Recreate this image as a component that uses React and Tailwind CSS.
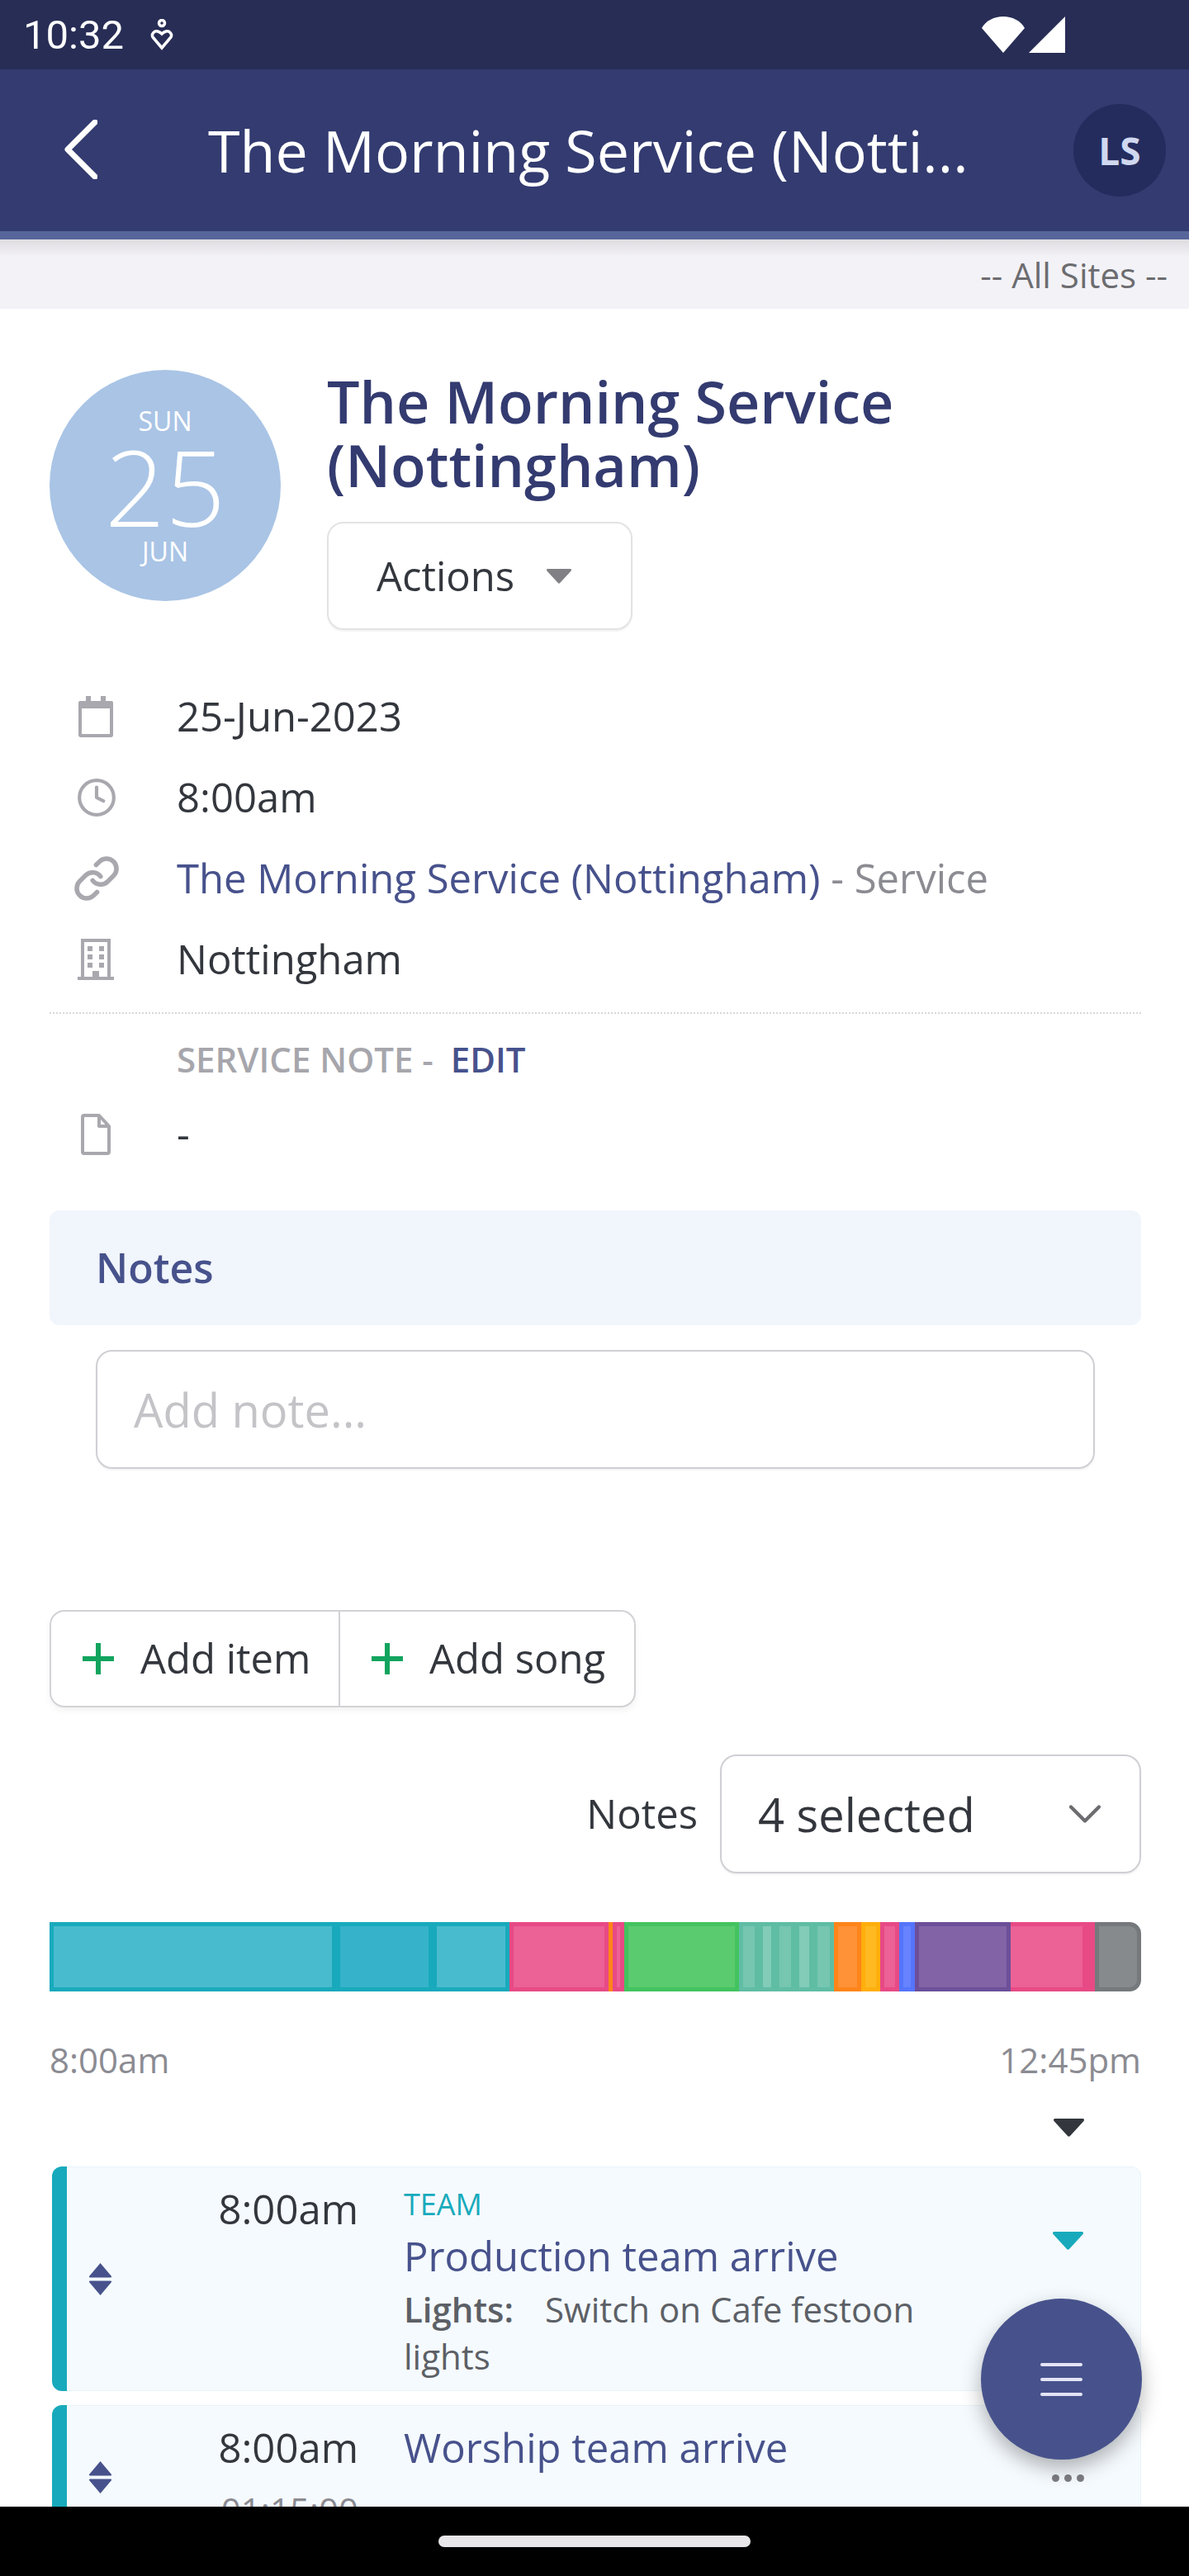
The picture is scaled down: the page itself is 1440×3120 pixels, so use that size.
import React from "react";
import { ChevronDown, Clock, Link } from "lucide-react";

// timeline blocks, x positions read off the reference
const SEGMENTS = [
  { w: 347, cls: "border-[#18aabc] bg-[#49bbce]" },
  { w: 117, cls: "border-[#18aabc] bg-[#36b3ca]" },
  { w: 93, cls: "border-[#18aabc] bg-[#49bbce]" },
  { w: 120, cls: "border-[#e74a85] bg-[#ec6196]" },
  { w: 5, cls: "border-x-0 border-[#ff8419] bg-[#ff8419]" },
  { w: 14, cls: "border-[#e74a85] bg-[#ec6196]" },
  { w: 139, cls: "border-[#43c35f] bg-[#5bcb6f]" },
  { w: 24, cls: "border-[#5fbda4] bg-[#76c6b0]" },
  { w: 20, cls: "border-[#5fbda4] bg-[#82ccb8]" },
  { w: 24, cls: "border-[#5fbda4] bg-[#76c6b0]" },
  { w: 22, cls: "border-[#5fbda4] bg-[#82ccb8]" },
  { w: 25, cls: "border-[#5fbda4] bg-[#76c6b0]" },
  { w: 33, cls: "border-[#ff8419] bg-[#ff9137]" },
  { w: 23, cls: "border-[#ffae0c] bg-[#ffba22]" },
  { w: 23, cls: "border-[#e74a85] bg-[#ec6196]" },
  { w: 19, cls: "border-[#5574fb] bg-[#6783ff]" },
  { w: 116, cls: "border-[#6c4f99] bg-[#8263a6]" },
  { w: 102, cls: "border-l-0 border-r-[15px] border-[#e74a85] bg-[#ec6196]" },
  { w: 56, cls: "border-[#75797c] bg-[#868a8c] rounded-r-[14px]" },
];

const Triangle = ({ className }) => (
  <svg viewBox="0 0 37 22" className={className} fill="currentColor">
    <path d="M2 0h33c2 0 2.500 1.500 1.500 3L20 21c-.8 1-2.200 1-3 0L.5 3C-.5 1.500 0 0 2 0z" />
  </svg>
);

const SortIcon = () => (
  <svg viewBox="0 0 27 39" className="w-[27px] h-[39px] text-[#47528c]" fill="currentColor">
    <path d="M13.500 0 27 16c.3.800 0 1.500-1 1.500H1c-1 0-1.300-.7-1-1.500z" />
    <path d="M13.500 39 27 23c.3-.8 0-1.500-1-1.500H1c-1 0-1.300.7-1 1.500z" />
  </svg>
);

const PlusIcon = () => (
  <svg viewBox="0 0 38 38" className="w-[38px] h-[38px] text-[#12a45e] mr-[32px]" fill="currentColor">
    <path d="M16 0h6v16h16v6H22v16h-6V22H0v-6h16z" />
  </svg>
);

const CalendarIcon = () => (
  <svg viewBox="0 0 44 50" className="w-[44px] h-[50px] ml-[2px]" fill="none">
    <path d="M3 6h38a2 2 0 0 1 2 2v39a3 3 0 0 1-3 3H4a3 3 0 0 1-3-3V8a2 2 0 0 1 2-2z" fill="#a8a8ae" />
    <rect x="5" y="15" width="34" height="31" fill="#fff" />
    <rect x="10" y="0" width="6" height="8" fill="#a8a8ae" />
    <rect x="28" y="0" width="6" height="8" fill="#a8a8ae" />
  </svg>
);

const BuildingIcon = () => (
  <svg viewBox="0 0 44 50" className="w-[44px] h-[50px] ml-[2px]" fill="#a8a8ae">
    <path d="M4 0h36v46h5v4H-1v-4h5zm4 4v42h10v-7h8v7h10V4z" />
    <rect x="12" y="9" width="6" height="6" />
    <rect x="26" y="9" width="6" height="6" />
    <rect x="12" y="19" width="6" height="6" />
    <rect x="26" y="19" width="6" height="6" />
    <rect x="12" y="29" width="6" height="6" />
    <rect x="26" y="29" width="6" height="6" />
  </svg>
);

const DocIcon = () => (
  <svg viewBox="0 0 36 50" className="w-[36px] h-[50px] ml-[6px]" fill="none" stroke="#a8a8ae" strokeWidth="4" strokeLinejoin="round">
    <path d="M4 2h18l12 13v31a2 2 0 0 1-2 2H4a2 2 0 0 1-2-2V4a2 2 0 0 1 2-2z" />
    <path d="M22 2v13h12" />
  </svg>
);

const InfoRow = ({ icon, children }) => (
  <div className="flex items-center h-[98px]">
    <div className="w-[154px] pl-[32px] flex items-center text-[#a8a8ae]">{icon}</div>
    <div className="text-[49px] text-[#33373d]">{children}</div>
  </div>
);

export default function App() {
  return (
    <div className="relative w-[1440px] h-[3120px] overflow-hidden flex flex-col bg-white font-['Open_Sans',sans-serif]">
      {/* android status bar */}
      <div className="h-[84px] shrink-0 bg-[#272d55] flex items-center justify-between pl-[28px] pr-[150px] text-white">
        <div className="flex items-center gap-[32px]">
          <span className="font-['Roboto',sans-serif] text-[49px] leading-none">10:32</span>
          <svg viewBox="0 0 28 38" className="w-[28px] h-[38px]" fill="none" stroke="#fff" strokeWidth="3.500">
            <circle cx="14" cy="5" r="3.500" />
            <path d="M14 35 3 22c-2-4 2-8 6-7 2 .5 4 2 5 3 1-1 3-2.500 5-3 4-1 8 3 6 7z" />
          </svg>
        </div>
        <div className="flex items-end gap-[5px]">
          <svg viewBox="0 0 52 44" className="w-[52px] h-[44px]" fill="#fff">
            <path d="M26 44 0 14C5 5 15 0 26 0s21 5 26 14z" />
          </svg>
          <svg viewBox="0 0 44 44" className="w-[44px] h-[44px]" fill="#fff">
            <path d="M44 0v44H0z" />
          </svg>
        </div>
      </div>

      {/* app bar */}
      <div className="h-[196px] shrink-0 bg-[#333b70] flex items-center relative">
        <svg viewBox="0 0 40 72" className="w-[40px] h-[72px] ml-[78px] mt-[-2px]" fill="none" stroke="#fff" strokeWidth="7" strokeLinecap="round" strokeLinejoin="round">
          <path d="M37 3 4 36l33 33" />
        </svg>
        <div className="ml-[134px] w-[940px] whitespace-nowrap overflow-hidden text-[70px] leading-[96px] text-white">The Morning Service (Notti...</div>
        <div className="absolute left-[1300px] top-[42px] w-[112px] h-[112px] rounded-full bg-[#242c5e] flex items-center justify-center text-[46px] font-bold text-[#d0d8f0]">
          LS
        </div>
      </div>
      <div className="h-[10px] shrink-0 bg-[#56659a]" />

      {/* site filter */}
      <div className="h-[84px] shrink-0 bg-gradient-to-b from-[#dfdce0] via-[#f3f2f7] via-[25%] to-[#f3f2f7] flex items-center justify-end pr-[26px] text-[42px] text-[#6c6c70]">
        -- All Sites --
      </div>

      <div className="flex-1 min-h-0 overflow-hidden pl-[60px] pr-[58px]">
        {/* heading */}
        <div className="flex pt-[74px]">
          <div className="w-[280px] h-[280px] shrink-0 rounded-full bg-[#a9c4e5] flex flex-col items-center text-white">
            <div className="mt-[46px] text-[32px] leading-[32px]">SUN</div>
            <div className="text-[128px] leading-[126px] font-light">25</div>
            <div className="text-[32px] leading-[32px]">JUN</div>
          </div>
          <div className="ml-[56px]">
            <h1 className="text-[70px] leading-[77px] font-semibold text-[#333b70]">
              The Morning Service
              <br />
              (Nottingham)
            </h1>
            <div className="mt-[30px] w-[370px] h-[131px] rounded-[20px] border-2 border-[#e3e3e6] shadow-[0_2px_2px_rgba(0,0,0,0.05)] flex items-center pl-[58px] text-[49px] text-[#33373d]">
              Actions
              <Triangle className="ml-[39px] w-[30px] h-[18px] text-[#808085]" />
            </div>
          </div>
        </div>

        {/* details */}
        <div className="mt-[56px]">
          <InfoRow icon={<CalendarIcon />}>25-Jun-2023</InfoRow>
          <InfoRow icon={<Clock size={50} strokeWidth={2} />}>8:00am</InfoRow>
          <InfoRow icon={<Link size={58} strokeWidth={2.3} className="-ml-[4px] -mr-[4px]" />}>
            <span className="text-[#47528c]">The Morning Service (Nottingham)</span>
            <span className="text-[#8b8b92]"> - Service</span>
          </InfoRow>
          <InfoRow icon={<BuildingIcon />}>Nottingham</InfoRow>
        </div>

        <div className="mt-[15px] border-t-2 border-dotted border-[#d8d8dc] pt-[25px] pl-[154px] text-[42px] leading-[60px] font-semibold">
          <span className="text-[#a6a6ac]">SERVICE NOTE - </span>
          <span className="ml-[10px] text-[#47528c]">EDIT</span>
        </div>
        <div className="flex items-center h-[66px] mt-[28px]">
          <div className="w-[154px] pl-[32px]">
            <DocIcon />
          </div>
          <div className="text-[49px] text-[#33373d]">-</div>
        </div>

        {/* notes */}
        <div className="mt-[59px] h-[139px] rounded-[12px] bg-[#f1f5fc] flex items-center pl-[56px] text-[50px] font-semibold text-[#47528c]">
          Notes
        </div>
        <div className="mt-[30px] mx-[56px] h-[144px] rounded-[20px] border-2 border-[#cfcfd4] shadow-[0_2px_2px_rgba(0,0,0,0.05)] flex items-center pl-[44px] text-[56px] text-[#c4c4c8]">
          Add note...
        </div>

        {/* add buttons */}
        <div className="mt-[171px] flex w-[710px] h-[118px] rounded-[18px] border-2 border-[#d2d2d6] shadow-[0_4px_8px_rgba(0,0,0,0.05)] text-[49px] text-[#33373d]">
          <div className="w-[350px] flex items-center pl-[38px] border-r-2 border-[#d2d2d6]">
            <PlusIcon />
            Add item
          </div>
          <div className="flex-1 flex items-center pl-[38px]">
            <PlusIcon />
            Add song
          </div>
        </div>

        {/* filter */}
        <div className="mt-[57px] flex items-center justify-end gap-[27px]">
          <span className="text-[49px] text-[#33373d]">Notes</span>
          <div className="w-[510px] h-[144px] rounded-[20px] border-2 border-[#cfcfd4] shadow-[0_2px_2px_rgba(0,0,0,0.05)] flex items-center justify-between pl-[44px] pr-[32px] text-[56px] text-[#33373d]">
            4 selected
            <ChevronDown size={68} strokeWidth={1.5} className="text-[#6c6c70]" />
          </div>
        </div>

        {/* timeline */}
        <div className="mt-[59px] flex h-[84px]">
          {SEGMENTS.map((seg, i) => (
            <div key={i} className={`h-full shrink-0 border-[5px] ${seg.cls}`} style={{ width: seg.w }} />
          ))}
        </div>
        <div className="mt-[56px] flex justify-between text-[42px] leading-[54px] text-[#8b8b92]">
          <span>8:00am</span>
          <span>12:45pm</span>
        </div>
        <div className="flex justify-end pr-[69px] mt-[44px] h-[58px]">
          <Triangle className="w-[37px] h-[22px] text-[#33373d]" />
        </div>

        {/* running order */}
        <div className="ml-[3px] h-[272px] flex">
          <div className="w-[18px] shrink-0 rounded-l-[12px] bg-[#18aabc]" />
          <div className="flex-1 min-w-0 flex rounded-r-[12px] bg-[#f5fafe] border border-l-0 border-[#e9f4f8]">
            <div className="w-[27px] ml-[27px] shrink-0 flex items-center">
              <SortIcon />
            </div>
            <div className="w-[299px] shrink-0 pt-[18px] text-right text-[49px] leading-[64px] text-[#33373d]">8:00am</div>
            <div className="ml-[55px] pt-[25px]">
              <div className="text-[36px] leading-[40px] text-[#18aabc]">TEAM</div>
              <div className="mt-[9px] text-[49px] leading-[66px] text-[#47528c]">Production team arrive</div>
              <div className="mt-[3px] w-[660px] text-[42px] leading-[57px] text-[#5c6066]">
                <span className="font-semibold">Lights:</span>
                <span className="ml-[38px]">Switch on Cafe festoon lights</span>
              </div>
            </div>
            <div className="flex-1 flex justify-end pr-[69px] pt-[78px]">
              <Triangle className="w-[37px] h-[22px] text-[#18aabc]" />
            </div>
          </div>
        </div>
        <div className="mt-[17px] ml-[3px] h-[174px] flex">
          <div className="w-[18px] shrink-0 rounded-l-[12px] bg-[#18aabc]" />
          <div className="flex-1 min-w-0 flex rounded-r-[12px] bg-[#f5fafe] border border-l-0 border-[#e9f4f8]">
            <div className="w-[27px] ml-[27px] shrink-0 flex items-center">
              <SortIcon />
            </div>
            <div className="w-[299px] shrink-0 pt-[18px] text-right text-[49px] leading-[64px] text-[#33373d]">
              8:00am
              <div className="mt-[19px] text-[42px] leading-[50px] text-[#8b8b92]">01:15:00</div>
            </div>
            <div className="ml-[55px] pt-[18px] text-[49px] leading-[64px] text-[#47528c]">Worship team arrive</div>
            <div className="flex-1 flex justify-end gap-[6px] pr-[68px] pt-[83px]">
              <div className="w-[9px] h-[9px] rounded-full bg-[#7d7d82]" />
              <div className="w-[9px] h-[9px] rounded-full bg-[#7d7d82]" />
              <div className="w-[9px] h-[9px] rounded-full bg-[#7d7d82]" />
            </div>
          </div>
        </div>
      </div>

      {/* nav bar */}
      <div className="h-[84px] shrink-0 bg-black flex items-center justify-center">
        <div className="w-[378px] h-[14px] rounded-full bg-[#e8e6e8]" />
      </div>

      {/* fab */}
      <div className="absolute left-[1188px] top-[2784px] w-[195px] h-[195px] rounded-full bg-[#47528c] shadow-[0_10px_24px_rgba(0,0,0,0.3)] flex flex-col items-center justify-center gap-[14px]">
        <div className="w-[51px] h-[4px] rounded-full bg-[#e4e4f6]" />
        <div className="w-[51px] h-[4px] rounded-full bg-[#e4e4f6]" />
        <div className="w-[51px] h-[4px] rounded-full bg-[#e4e4f6]" />
      </div>
    </div>
  );
}
